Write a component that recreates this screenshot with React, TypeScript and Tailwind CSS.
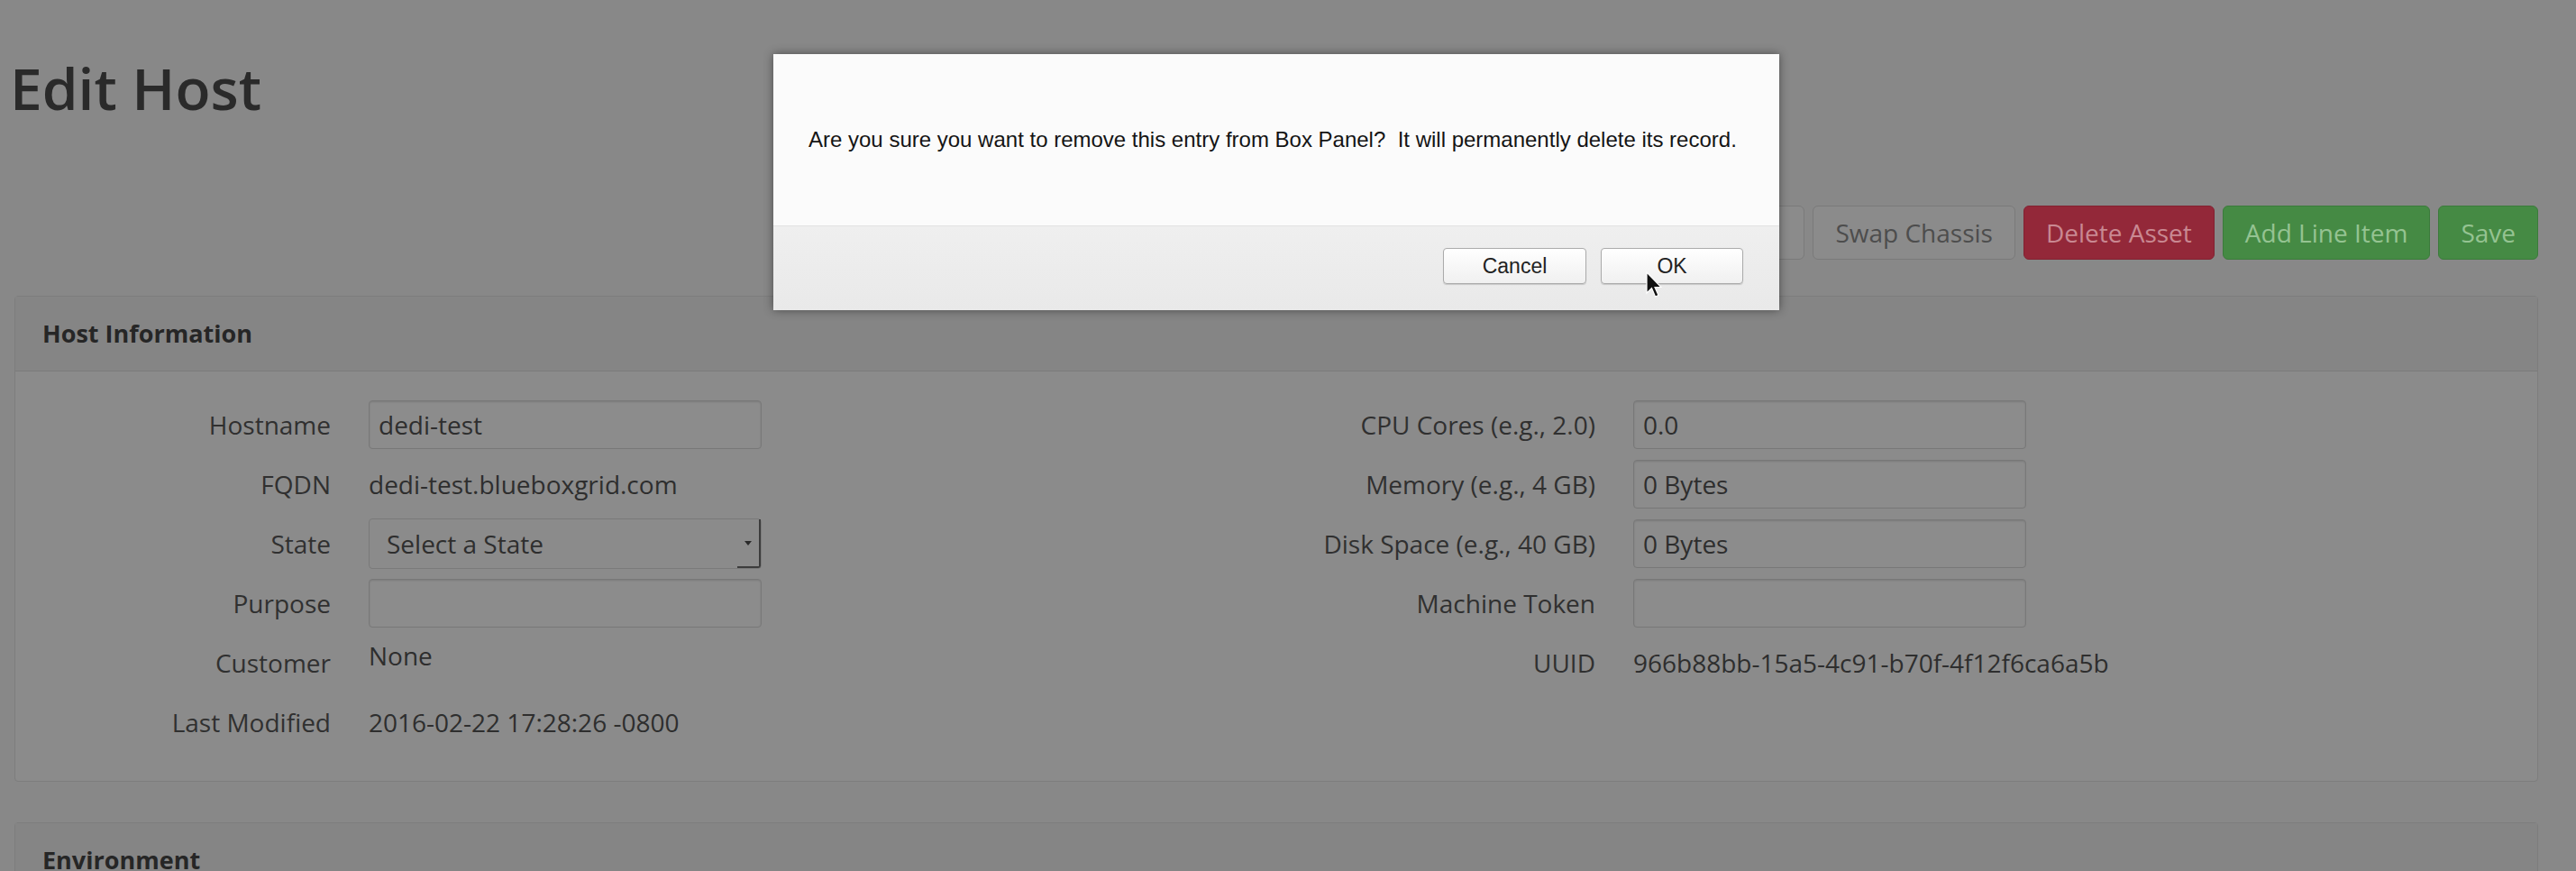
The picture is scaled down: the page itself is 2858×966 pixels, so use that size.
type Field = {
  label: string
  kind: "input" | "text" | "select" | "top"
  value: string
}

const leftFields: Field[] = [
  { label: "Hostname", kind: "input", value: "dedi-test" },
  { label: "FQDN", kind: "text", value: "dedi-test.blueboxgrid.com" },
  { label: "State", kind: "select", value: "Select a State" },
  { label: "Purpose", kind: "input", value: "" },
  { label: "Customer", kind: "top", value: "None" },
  { label: "Last Modified", kind: "text", value: "2016-02-22 17:28:26 -0800" },
]

const rightFields: Field[] = [
  { label: "CPU Cores (e.g., 2.0)", kind: "input", value: "0.0" },
  { label: "Memory (e.g., 4 GB)", kind: "input", value: "0 Bytes" },
  { label: "Disk Space (e.g., 40 GB)", kind: "input", value: "0 Bytes" },
  { label: "Machine Token", kind: "input", value: "" },
  { label: "UUID", kind: "text", value: "966b88bb-15a5-4c91-b70f-4f12f6ca6a5b" },
]

const FieldValue = ({ field }: { field: Field }) => {
  if (field.kind === "input") {
    return (
      <input
        readOnly
        defaultValue={field.value}
        className="h-[54px] w-full rounded-[4px] border border-[#787878] bg-[#8c8c8c] px-[10px] text-[28px] text-[#2e2e2e] shadow-[inset_0_1px_2px_rgba(0,0,0,0.12)] outline-none"
      />
    )
  }
  if (field.kind === "select") {
    return (
      <div className="flex h-[56px] w-[437px] items-center justify-between rounded-[4px] border border-[#7a7a7a] bg-[#8b8b8b] pl-[19px] text-[28px] text-[#2e2e2e]">
        <span>{field.value}</span>
        <div className="flex h-full w-[26px] items-center justify-center rounded-br-[3px] border-r-2 border-b-2 border-[#3c3c3c]">
          <span className="h-0 w-0 border-x-[4px] border-t-[5px] border-x-transparent border-t-[#2a2a2a]" />
        </div>
      </div>
    )
  }
  if (field.kind === "top") {
    return <div className="self-start text-[28px] leading-[38px] text-[#2e2e2e]">{field.value}</div>
  }
  return <div className="whitespace-nowrap text-[28px] text-[#2e2e2e]">{field.value}</div>
}

const FieldColumn = ({ fields, labelWidth }: { fields: Field[]; labelWidth: string }) => {
  return (
    <div className="flex flex-col gap-[12px]">
      {fields.map((f) => (
        <div key={f.label} className="flex h-[54px] items-center">
          <div className={`${labelWidth} shrink-0 text-right text-[28px] text-[#303030]`}>{f.label}</div>
          <div className="ml-[42px] flex h-full w-[436px] items-center">
            <FieldValue field={f} />
          </div>
        </div>
      ))}
    </div>
  )
}

const ActionButton = ({
  label,
  tone,
  pad = "px-[24px]",
}: {
  label: string
  tone: "default" | "danger" | "success"
  pad?: string
}) => {
  const tones = {
    default: "bg-[#8b8b8b] border-[#7a7a7a] text-[#4d4d4d]",
    danger: "bg-[#932839] border-[#822131] text-[#c98892]",
    success: "bg-[#458a44] border-[#3b7b3b] text-[#95c392]",
  }
  return (
    <button className={`h-[60px] whitespace-nowrap rounded-[6px] border text-[28px] ${pad} ${tones[tone]}`}>{label}</button>
  )
}

const App = () => {
  return (
    <div className="relative min-h-screen overflow-hidden bg-[#888888] font-['Open_Sans',sans-serif]">
      <div className="pt-[54px] pl-[16px] pr-[42px]">
        <h1 className="-ml-[5px] text-[64px] leading-[87px] font-semibold text-[#2a2a2a]">Edit Host</h1>

        {/* toolbar */}
        <div className="mt-[87px] flex justify-end gap-[9px]">
          <ActionButton label="Reboot Host" tone="default" pad="pl-[24px] pr-[44px]" />
          <ActionButton label="Swap Chassis" tone="default" />
          <ActionButton label="Delete Asset" tone="danger" />
          <ActionButton label="Add Line Item" tone="success" />
          <ActionButton label="Save" tone="success" />
        </div>

        {/* Host Information */}
        <div className="mt-[40px] rounded-[4px] border border-[#7d7d7d] bg-[#8b8b8b]">
          <div className="flex h-[83px] items-center border-b border-[#7b7b7b] bg-[#858585] pl-[30px] text-[27px] font-bold text-[#262626]">
            Host Information
          </div>
          <div className="grid grid-cols-2 pt-[32px] pb-[38px]">
            <FieldColumn fields={leftFields} labelWidth="w-[350px]" />
            <div className="pl-[4px]">
              <FieldColumn fields={rightFields} labelWidth="w-[350px]" />
            </div>
          </div>
        </div>

        {/* Environment */}
        <div className="mt-[45px] rounded-[4px] border border-[#7d7d7d] bg-[#8b8b8b]">
          <div className="flex h-[83px] items-center border-b border-[#7b7b7b] bg-[#858585] pl-[30px] text-[27px] font-bold text-[#262626]">
            Environment
          </div>
          <div className="h-[300px]" />
        </div>
      </div>

      {/* confirm dialog */}
      <div className="absolute top-[60px] left-[858px] w-[1116px] bg-[#fbfbfb] font-['Liberation_Sans',Arial,sans-serif] shadow-[0_0_10px_rgba(0,0,0,0.45)]">
        <div className="flex h-[190px] items-center pl-[39px] text-[24px] text-[#141414]">
          Are you sure you want to remove this entry from Box Panel?&nbsp; It will permanently delete its record.
        </div>
        <div className="flex h-[94px] justify-end gap-[16px] border-t border-[#e2e2e2] bg-gradient-to-b from-[#efefef] to-[#e9e9e9] pt-[24px] pr-[40px]">
          <button className="h-[40px] w-[159px] rounded-[4px] border border-[#ababab] bg-gradient-to-b from-[#ffffff] to-[#f0f0f0] text-[23px] text-[#222222] shadow-[0_1px_1px_rgba(0,0,0,0.15)]">
            Cancel
          </button>
          <button className="h-[40px] w-[158px] rounded-[4px] border border-[#ababab] bg-gradient-to-b from-[#ffffff] to-[#f0f0f0] text-[23px] text-[#222222] shadow-[0_1px_1px_rgba(0,0,0,0.15)]">
            OK
          </button>
        </div>
      </div>

      {/* mouse pointer */}
      <svg className="absolute top-[301px] left-[1826px]" width="18" height="30" viewBox="0 0 18 30">
        <path d="M1 1 L1 24 L6.5 18.5 L10.5 28 L14 26.5 L10 17.5 L17 17.5 Z" fill="#111" stroke="#fff" strokeWidth="1.2" />
      </svg>
    </div>
  )
}

export default App
